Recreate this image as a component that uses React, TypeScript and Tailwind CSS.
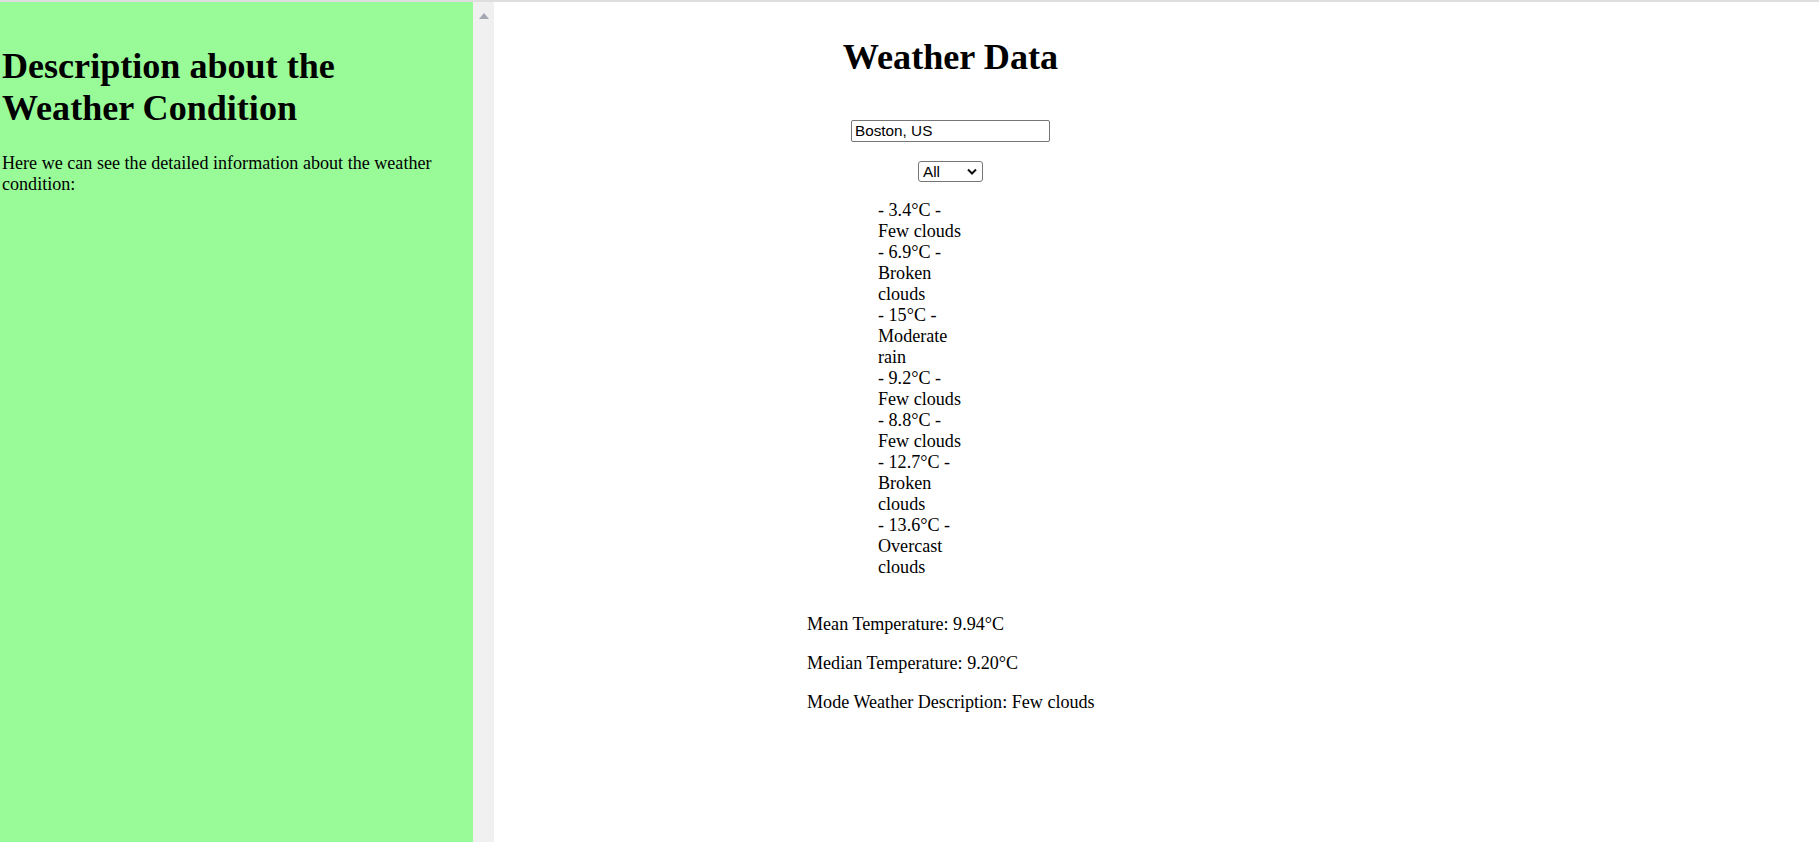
import React from "react";

// readings shown in the list
const readings = [
  { temp: "3.4°C", desc: "Few clouds" },
  { temp: "6.9°C", desc: "Broken clouds" },
  { temp: "15°C", desc: "Moderate rain" },
  { temp: "9.2°C", desc: "Few clouds" },
  { temp: "8.8°C", desc: "Few clouds" },
  { temp: "12.7°C", desc: "Broken clouds" },
  { temp: "13.6°C", desc: "Overcast clouds" },
];

export default function App() {
  return (
    <div className="w-full h-[842px] overflow-hidden bg-white text-black font-['Liberation_Serif','Times_New_Roman',serif] text-[18.1px] leading-[21px]">
      <div className="h-[2px] bg-[#dedede]" />

      <div className="flex h-[840px]">
        {/* --- SIDEBAR --- */}
        <aside className="w-[473px] shrink-0 bg-[#98fb98] pl-[2px] pr-[4px]">
          <h1 className="mt-[43px] text-[36.1px] leading-[42.3px] font-bold">
            Description about the Weather Condition
          </h1>
          <p className="mt-[23px]">
            Here we can see the detailed information about the weather condition:
          </p>
        </aside>

        {/* fake scrollbar of the sidebar */}
        <div className="w-[21px] shrink-0 bg-[#f0f0f0] flex justify-center pt-[11px]">
          <svg width="10" height="6" viewBox="0 0 10 6">
            <polygon points="5,0 10,6 0,6" fill="#a3a8b3" />
          </svg>
        </div>

        {/* --- MAIN --- */}
        <main className="flex-1 pl-[313px]">
          <div className="w-[287px] flex flex-col">
            <h1 className="mt-[34px] text-center text-[36.2px] leading-[42.3px] font-bold whitespace-nowrap">
              Weather Data
            </h1>

            <div className="mt-[42px] flex justify-center">
              <input
                type="text"
                defaultValue="Boston, US"
                className="w-[199px] h-[22px] border border-[#767676] rounded-[2px] px-[3px] text-[15.3px] font-['Liberation_Sans',Arial,sans-serif] outline-none"
              />
            </div>

            <div className="mt-[19px] flex justify-center">
              <div className="relative w-[65px] h-[21px]">
                <select
                  defaultValue="all"
                  className="appearance-none w-full h-full border border-[#767676] rounded-[3px] pl-[4px] text-[15.3px] leading-[19px] font-['Liberation_Sans',Arial,sans-serif] bg-white"
                >
                  <option value="all">All</option>
                  <option value="clouds">Clouds</option>
                  <option value="rain">Rain</option>
                </select>
                <svg
                  className="absolute right-[6px] top-[7px] pointer-events-none"
                  width="10"
                  height="7"
                  viewBox="0 0 10 7"
                >
                  <polyline points="1,1.5 5,5.5 9,1.5" fill="none" stroke="#111" strokeWidth="2" />
                </svg>
              </div>
            </div>

            <ul className="mt-[18px] ml-[71px] w-[95px]">
              {readings.map((r, i) => (
                <li key={i}>
                  {" "}- {r.temp} - {r.desc}
                </li>
              ))}
            </ul>

            <div className="mt-[36px] flex flex-col gap-[18px] whitespace-nowrap">
              <p>Mean Temperature: 9.94°C</p>
              <p>Median Temperature: 9.20°C</p>
              <p>Mode Weather Description: Few clouds</p>
            </div>
          </div>
        </main>
      </div>
    </div>
  );
}
